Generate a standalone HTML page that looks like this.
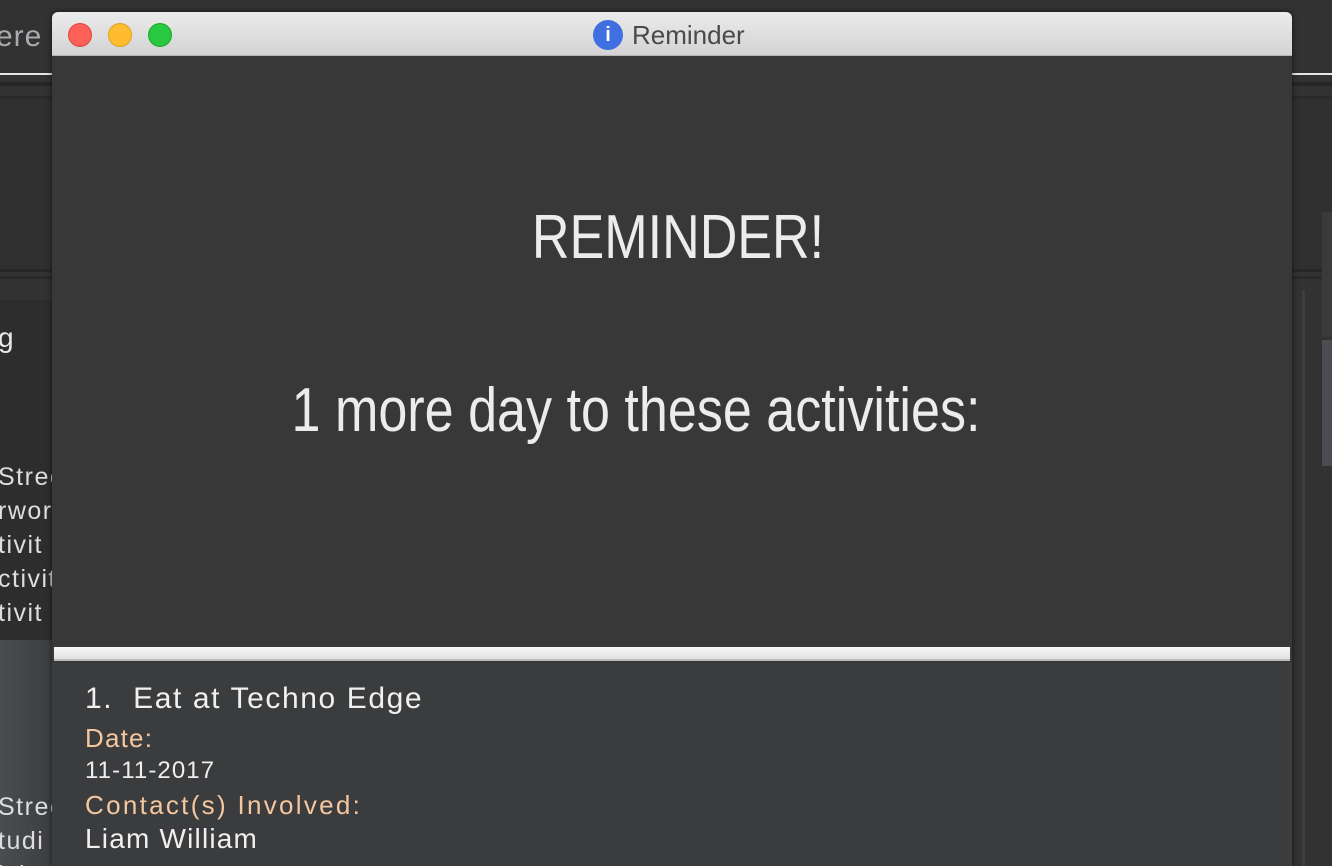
<!DOCTYPE html>
<html><head><style>
*{margin:0;padding:0;box-sizing:border-box}
html,body{width:1332px;height:866px;overflow:hidden}
body{background:#333;font-family:"Liberation Sans",sans-serif;position:relative}
.a{position:absolute}
.t{position:absolute;white-space:nowrap}
</style></head><body>
<div class="a" style="left:0;top:0;width:1332px;height:866px;background:#323232"></div>
<div class="t" style="left:-4px;top:20px;font-size:30px;color:#a8aaad;letter-spacing:1px">ere</div>
<div class="a" style="left:0;top:73px;width:1332px;height:2px;background:#e6e6e6"></div>
<div class="a" style="left:0;top:82px;width:1332px;height:4px;background:#262626"></div>
<div class="a" style="left:0;top:96px;width:1332px;height:3px;background:#2a2a2a"></div>
<div class="a" style="left:0;top:99px;width:1332px;height:170px;background:#303030"></div>
<div class="a" style="left:0;top:269px;width:1332px;height:3px;background:#262626"></div>
<div class="a" style="left:0;top:276px;width:1332px;height:3px;background:#2a2a2a"></div>
<div class="a" style="left:0;top:300px;width:52px;height:340px;background:#2d2d2d"></div>
<div class="a" style="left:0;top:640px;width:52px;height:226px;background:linear-gradient(90deg,#4a4d50,#3c3e40)"></div>
<div class="t" style="left:-2px;top:322px;font-size:28px;color:#e8e8e8">g</div>
<div style="position:absolute;left:-2px;top:460px;font-size:25px;line-height:34px;color:#ddd;letter-spacing:1.5px;white-space:nowrap">Stree<br>rwor<br>tivit<br>ctivit<br>tivit</div>
<div style="position:absolute;left:-2px;top:790px;font-size:25px;line-height:34px;color:#ddd;letter-spacing:1.5px;white-space:nowrap">Stree<br>tudi<br>ivit</div>
<div class="a" style="left:1302px;top:290px;width:3px;height:576px;background:#3e3e3e"></div>
<div class="a" style="left:1322px;top:212px;width:10px;height:125px;background:#3a3a3a"></div>
<div class="a" style="left:1322px;top:340px;width:10px;height:126px;background:#4a4e52"></div>
<div class="a" style="left:52px;top:12px;width:1240px;height:854px;background:#383838;border-radius:6px 6px 0 0;box-shadow:0 0 6px rgba(0,0,0,.6);overflow:hidden">
  <div class="a" style="left:0;top:0;width:1240px;height:44px;background:linear-gradient(#ebebeb,#d3d3d3);border-bottom:1px solid #b5b5b5"></div>
  <div class="a" style="left:16px;top:11px;width:24px;height:24px;border-radius:50%;background:#fe5f57;border:1px solid #e0443e"></div>
  <div class="a" style="left:56px;top:11px;width:24px;height:24px;border-radius:50%;background:#febc2e;border:1px solid #dea123"></div>
  <div class="a" style="left:96px;top:11px;width:24px;height:24px;border-radius:50%;background:#28c840;border:1px solid #1aab29"></div>
  <div class="a" style="left:541px;top:8px;width:30px;height:30px;border-radius:50%;background:#3f6fe0;color:#fff;font:bold 20px/30px 'Liberation Sans',sans-serif;text-align:center">i</div>
  <div class="t" style="left:580px;top:8px;font-size:26px;color:#4a4a4a">Reminder</div>
  <div class="t" style="left:6px;width:1240px;text-align:center;top:190px;font-size:62px;color:#ececec;transform:scaleX(.84)">REMINDER!</div>
  <div class="t" style="left:-36px;width:1240px;text-align:center;top:363px;font-size:62px;color:#ececec;transform:scaleX(.84)">1 more day to these activities:</div>
  <div class="a" style="left:2px;top:635px;width:1236px;height:14px;background:linear-gradient(#f8f8f8,#e2e2e2);border-bottom:2px solid #bbb"></div>
  <div class="a" style="left:0;top:650px;width:1240px;height:220px;background:#3b3c3e"></div>
  <div class="t" style="left:33px;top:670px;font-size:30px;color:#f0f0f0;letter-spacing:1.6px">1.&nbsp; Eat at Techno Edge</div>
  <div class="t" style="left:33px;top:711px;font-size:26px;color:#f4c79e;letter-spacing:1.2px">Date:</div>
  <div class="t" style="left:33px;top:745px;font-size:24px;color:#eee;letter-spacing:1.1px">11-11-2017</div>
  <div class="t" style="left:33px;top:778px;font-size:26px;color:#f4c79e;letter-spacing:2.3px">Contact(s) Involved:</div>
  <div class="t" style="left:33px;top:811px;font-size:28px;color:#f0f0f0;letter-spacing:1.2px">Liam William</div>
</div>
</body></html>
